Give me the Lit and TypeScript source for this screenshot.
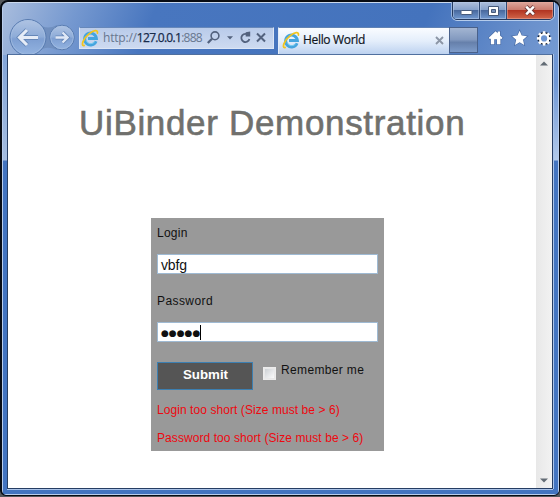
import { LitElement, html, svg, css } from "lit";
import { customElement, property } from "lit/decorators.js";

const ieLogo = html`<svg width="19" height="19" viewBox="0 0 19 19" fill="none">
  <path d="M15 12.2A5.9 5.9 0 1 1 15.4 9.6H7" stroke="#45a5df" stroke-width="3"/>
  <path d="M14 12.3A4.9 4.9 0 0 1 5 11" stroke="#7accf0" stroke-width="1"/>
  <path d="M3.1 16.5C-.6 17.3 2.2 9.2 8.3 4.6C12.6 1.3 17.1.4 16.4 4" stroke="#f2c51f" stroke-width="1.8" stroke-linecap="round"/>
</svg>`;

@customElement("browser-bar")
export class BrowserBar extends LitElement {
  static styles = css`
    :host { display: block; position: relative; height: 52px; font: 12px "Open Sans", "Noto Sans", sans-serif; }
    svg { display: block; flex: none; }
    .row { display: flex; align-items: flex-start; height: 52px; padding-left: 1px; box-sizing: border-box; overflow: hidden; }
    .nav { margin-top: 14px; width: 71px; }
    .address {
      display: flex; align-items: center; box-sizing: border-box; flex: none; width: 195px; height: 22px; margin-top: 25px;
      padding-left: 1px; background: linear-gradient(#b9cbea, #cddaf0); border: 1px solid #dce6f6; border-top-color: #6788ba;
    }
    .url { width: 101px; margin-left: 3px; white-space: nowrap; color: #68778f; letter-spacing: -0.2px; line-height: 20px; }
    .host { color: #172b4a; letter-spacing: -0.7px; -webkit-text-stroke: 0.25px #172b4a; }
    .port { letter-spacing: -0.75px; }
    .tab {
      display: flex; align-items: center; box-sizing: border-box; flex: none; width: 171px; height: 27px; margin: 25px 0 0 4px; padding: 0 5px 2px 3px;
      background: linear-gradient(#fafcff 0, #e4eefb 50%, #bdd2f0 100%); border-left: 1px solid #e3ecf9; border-top: 1px solid #6082b5;
    }
    .title { flex: 1; margin-left: 2px; color: #10151d; letter-spacing: -0.33px; white-space: nowrap; line-height: 20px; -webkit-text-stroke: 0.2px #10151d; }
    .newtab { box-sizing: border-box; flex: none; width: 29px; height: 26px; margin-top: 25px; border: 1px solid #49618b; background: linear-gradient(#a3b5d2, #8299bf 48%, #6680ab 60%, #7d9bc9); }
    .tools { margin: 25px 0 0 10px; }
    .controls {
      position: absolute; top: -1px; right: -1px; display: flex; height: 19px; width: 102px; box-sizing: border-box;
      border: 1px solid #263b60; border-radius: 0 0 5px 5px; overflow: hidden; box-shadow: 0 1px 0 #b5ccec, -1px 0 0 #9ab6df, 1px 0 0 #b5ccec;
    }
    .control { display: flex; align-items: center; justify-content: center; width: 27px; box-sizing: border-box; border-right: 1px solid #304a75; background: linear-gradient(#aebfdb, #849fc9 48%, #49699e 50%, #7199d0); box-shadow: inset 0 0 0 1px #b9cce888; }
    .close { width: 46px; border: 0; background: linear-gradient(#dda79c, #c9796c 48%, #b23522 50%, #d2664a); box-shadow: inset 0 0 0 1px #e6aaa088; }
  `;
  render() {
    const teeth = Array.from({ length: 8 }, (_, i) => svg`<rect x="54.8" y="4.2" width="2.6" height="3.2" fill="#fff" transform="rotate(${i * 45} 56.1 11.4)"/>`);
    return html`
      <div class="row">
        <svg class="nav" width="71" height="40" viewBox="8 16 71 40">
          <defs><linearGradient id="orb" x1="0" y1="0" x2="0" y2="1"><stop offset="0" stop-color="#b0c4e3"/><stop offset=".48" stop-color="#8eacd8"/><stop offset=".54" stop-color="#7e9fd2"/><stop offset="1" stop-color="#94b4e1"/></linearGradient></defs>
          <path d="M38 23Q46 31 57 25V50Q46 45 40 51Z" fill="#708fbf"/>
          <circle cx="28" cy="37.5" r="18" fill="url(#orb)" stroke="#587bb0"/>
          <circle cx="28" cy="37.5" r="16.9" fill="none" stroke="#a8c0e2" stroke-width=".7"/>
          <circle cx="62" cy="37.5" r="12.3" fill="url(#orb)" stroke="#587bb0"/>
          <circle cx="62" cy="37.5" r="11.3" fill="none" stroke="#a8c0e2" stroke-width=".7"/>
          <path d="M38 37.5H20M27 30L19.5 37.5L27 45" fill="none" stroke="#6687b8" stroke-width="4.8"/>
          <path d="M38 37.5H20M27 30L19.5 37.5L27 45" fill="none" stroke="#e5ecf7" stroke-width="3.1"/>
          <path d="M55.5 37.5H67M62.5 32.5L67.5 37.5L62.5 42.5" fill="none" stroke="#6687b8" stroke-width="4"/>
          <path d="M55.5 37.5H67M62.5 32.5L67.5 37.5L62.5 42.5" fill="none" stroke="#dfe8f6" stroke-width="2.4"/>
        </svg>
        <div class="address">
          ${ieLogo}
          <div class="url">http://<span class="host">127.0.0.1</span><span class="port">:888</span></div>
          <svg width="63" height="18" viewBox="204 29 63 18" fill="none" stroke="#53627e">
            <circle cx="215" cy="35.8" r="3.9" stroke-width="1.6"/><path d="M212 38.8L207.8 43" stroke-width="2.3"/>
            <path d="M227 36.2H233L230 39.5Z" fill="#53627e" stroke="none"/>
            <path d="M248.6 35.3A4.1 4.1 0 1 0 249.4 39" stroke-width="1.8"/><path d="M245.7 32.2L250.2 31.6V36.5H245.7Z" fill="#53627e" stroke="none"/>
            <path d="M257 33.5L265 41.5M265 33.5L257 41.5" stroke-width="2"/>
          </svg>
        </div>
        <div class="tab">
          ${ieLogo}
          <div class="title">Hello World</div>
          <svg width="9" height="9" viewBox="0 0 9 9"><path d="M1 1L8 8M8 1L1 8" stroke="#8c96a6" stroke-width="1.9"/></svg>
        </div>
        <div class="newtab"></div>
        <svg class="tools" width="66" height="24" viewBox="0 0 66 24">
          <g stroke="#4c6fa8" stroke-width="1.4" paint-order="stroke">
            <path d="M.8 10.7L7.6 4.3L9.7 6.3V4.6H12V8.5L14.5 10.7L13.3 12.3L12.4 11.5V17.2H9V12.2H6.2V17.2H2.9V11.5L2 12.3Z" fill="#fff"/>
            <path d="M31.6 3.8L33.7 8.6L39 9.2L35 12.7L36.2 17.9L31.6 15.2L27 17.9L28.2 12.7L24.2 9.2L29.5 8.6Z" fill="#fff"/>
          </g>
          <circle cx="56.1" cy="11.4" r="6.6" stroke="#4c6fa8" stroke-width="1"/>
          ${teeth}
          <circle cx="56.1" cy="11.4" r="4.2" fill="#6d95d1" stroke="#fff" stroke-width="2.2"/>
        </svg>
      </div>
      <div class="controls">
        <div class="control"><svg width="13" height="12"><rect x="1" y="5.5" width="11" height="4" rx=".5" fill="#fff" stroke="#465a7b"/></svg></div>
        <div class="control"><svg width="13" height="12"><path d="M1.5 1.5H11.5V10.5H1.5Z" fill="#fff" stroke="#465a7b"/><path d="M4.5 4.5H8.5V7.5H4.5Z" fill="#7690ba" stroke="#465a7b"/></svg></div>
        <div class="control close"><svg width="14" height="13"><path d="M3 2.5L11 10.5M11 2.5L3 10.5" stroke="#713c3b" stroke-width="4.3"/><path d="M3.2 2.7L10.8 10.3M10.8 2.7L3.2 10.3" stroke="#fff" stroke-width="2.5"/></svg></div>
      </div>`;
  }
}

@customElement("login-form")
export class LoginForm extends LitElement {
  @property() login = "vbfg";
  static styles = css`
    :host { display: block; box-sizing: border-box; width: 233px; height: 233px; padding: 6px 6px 0; background: #999; color: #111; font: 12px/18px "Liberation Sans", Arial, sans-serif; }
    .label { height: 18px; margin-bottom: 12px; letter-spacing: 0.25px; }
    .wide { letter-spacing: 0.42px; }
    .field { display: flex; align-items: center; box-sizing: border-box; width: 221px; height: 20px; padding: 1px 4px 0 3px; margin-bottom: 18px; background: #fff; border: 1px solid #9fbad3; font-size: 14px; letter-spacing: -0.15px; color: #111; }
    .dots { font: 9px/18px "DejaVu Sans", sans-serif; letter-spacing: 0; }
    .caret { width: 1px; height: 15px; background: #000; }
    .actions { display: flex; height: 29px; padding-top: 2px; }
    .submit { display: flex; align-items: center; justify-content: center; box-sizing: border-box; width: 96px; height: 28px; padding-left: 1px; padding-bottom: 2px; border: 1px solid #3c7fb1; background: #555; color: #fff; font-weight: bold; font-size: 13.3px; }
    .check { box-sizing: border-box; width: 13px; height: 13px; margin: 5px 5px 0 10px; border: 1px solid #ececec; background: linear-gradient(135deg, #c9cdd1, #fff); box-shadow: inset 0 0 0 1px #e9e9e9; }
    .remember { margin-top: -1px; letter-spacing: 0.35px; }
    .error { margin-top: 10px; color: #ee0810; letter-spacing: 0.07px; white-space: nowrap; }
  `;
  render() {
    return html`
      <div class="label">Login</div>
      <div class="field">${this.login}</div>
      <div class="label wide">Password</div>
      <div class="field"><span class="dots">●●●●●</span><span class="caret"></span></div>
      <div class="actions"><div class="submit">Submit</div><div class="check"></div><div class="remember">Remember me</div></div>
      <div class="error">Login too short (Size must be &gt; 6)</div>
      <div class="error">Password too short (Size must be &gt; 6)</div>`;
  }
}

@customElement("app-root")
export class AppRoot extends LitElement {
  static styles = css`
    :host { display: block; width: 560px; height: 497px; background: #55585c; overflow: hidden; }
    .window {
      box-sizing: border-box; width: 560px; height: 496px; padding: 0 6px 5px 5px; border: 2px solid #080c14; border-width: 2px 1px 1px 2px; border-radius: 8px 8px 6px 6px; overflow: hidden;
      background:
        linear-gradient(#cbd9ed, #cbd9ed) top / 100% 1px no-repeat,
        linear-gradient(90deg, #b9cdec 0 1px, transparent 1px calc(100% - 1px), #b9cdec calc(100% - 1px)),
        linear-gradient(#b9cdec, #b9cdec) bottom / 100% 1px no-repeat,
        linear-gradient(112deg, #a9bddd 0, #7699d0 70px, #4876bf 145px, #4473bd 400px, #6b91cc 500px, #83a8dc 590px) top / 100% 53px no-repeat,
        linear-gradient(#7199d4, #a5bde0 158px, #4374c0 159px) left / 7px 100% no-repeat,
        linear-gradient(#749bd7, #6e96d4 80px, #b2c9e9 158px, #4374c0 159px) right / 7px 100% no-repeat,
        #4374c0;
    }
    .page { display: flex; box-sizing: border-box; height: 435px; border: 1px solid #263d63; border-top: 1px solid #50709f; box-shadow: 0 1px 0 #aac3e8, 1px 0 0 #aac3e8; background: #fff; }
    .content { flex: 1; padding-top: 47px; }
    .heading { margin: 0 0 75px 71px; font: 35px/41px "Liberation Sans", Arial, sans-serif; color: #70706d; -webkit-text-stroke: 0.6px #70706d; letter-spacing: 0.67px; white-space: nowrap; }
    .form { margin-left: 143px; }
    .scroll { display: flex; flex-direction: column; justify-content: space-between; align-items: center; box-sizing: border-box; width: 16px; padding: 6px 0 5px; background: linear-gradient(90deg, #e8e8e8, #f2f2f2); }
    .arrow { display: block; }
  `;
  render() {
    return html`<div class="window">
      <browser-bar></browser-bar>
      <div class="page">
        <div class="content"><h1 class="heading">UiBinder Demonstration</h1><login-form class="form"></login-form></div>
        <div class="scroll">
          <svg class="arrow" width="8" height="5"><path d="M0 4.5L4 .5L8 4.5Z" fill="#626b74"/></svg>
          <svg class="arrow" width="8" height="5"><path d="M0 .5L4 4.5L8 .5Z" fill="#626b74"/></svg>
        </div>
      </div>
    </div>`;
  }
}
